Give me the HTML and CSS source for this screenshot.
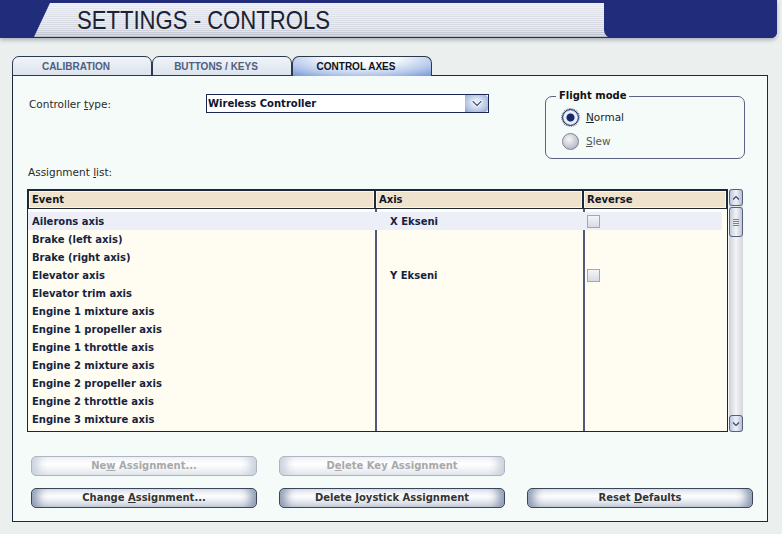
FILE: index.html
```html
<!DOCTYPE html>
<html lang="en">
<head>
    <meta charset="UTF-8">
    <title>Settings - Controls</title>
    <link rel="stylesheet" href="styles.css">
</head>
<body>
    <header class="titlebar">
        <div class="banner">
            <h1>SETTINGS - CONTROLS</h1>
        </div>
        <div class="cap"></div>
    </header>

    <main class="dialog">
        <nav class="tabs">
            <div class="tab">CALIBRATION</div>
            <div class="tab">BUTTONS / KEYS</div>
            <div class="tab active">CONTROL AXES</div>
        </nav>

        <section class="panel">
            <div class="top">
                <div class="ctrl-row">
                    <label>Controller <u>t</u>ype:</label>
                    <div class="select">
                        <span class="value">Wireless Controller</span>
                        <span class="drop">
                            <svg width="12" height="8" viewBox="0 0 12 8"><path d="M2 1.5 L6 5.5 L10 1.5" fill="none" stroke="#fff" stroke-width="3" stroke-linecap="round"/><path d="M2 1.5 L6 5.5 L10 1.5" fill="none" stroke="#4b5c8c" stroke-width="1.3" stroke-linecap="round"/></svg>
                        </span>
                    </div>
                </div>

                <fieldset class="mode">
                    <legend>Flight mode</legend>
                    <div class="radio on"><span class="dot"></span><span><u>N</u>ormal</span></div>
                    <div class="radio"><span class="dot"></span><span><u>S</u>lew</span></div>
                </fieldset>
            </div>

            <p class="caption">Assignment <u>l</u>ist:</p>

            <div class="list">
                <div class="grid">
                    <div class="head">
                        <div>Event</div>
                        <div>Axis</div>
                        <div>Reverse</div>
                    </div>
                    <div class="body">
                        <div class="row sel"><span class="ev">Ailerons axis</span><span class="ax">X Ekseni</span><span class="rv"><i class="box"></i></span></div>
                        <div class="row"><span class="ev">Brake (left axis)</span><span></span><span></span></div>
                        <div class="row"><span class="ev">Brake (right axis)</span><span></span><span></span></div>
                        <div class="row"><span class="ev">Elevator axis</span><span class="ax">Y Ekseni</span><span class="rv"><i class="box"></i></span></div>
                        <div class="row"><span class="ev">Elevator trim axis</span><span></span><span></span></div>
                        <div class="row"><span class="ev">Engine 1 mixture axis</span><span></span><span></span></div>
                        <div class="row"><span class="ev">Engine 1 propeller axis</span><span></span><span></span></div>
                        <div class="row"><span class="ev">Engine 1 throttle axis</span><span></span><span></span></div>
                        <div class="row"><span class="ev">Engine 2 mixture axis</span><span></span><span></span></div>
                        <div class="row"><span class="ev">Engine 2 propeller axis</span><span></span><span></span></div>
                        <div class="row"><span class="ev">Engine 2 throttle axis</span><span></span><span></span></div>
                        <div class="row"><span class="ev">Engine 3 mixture axis</span><span></span><span></span></div>
                    </div>
                </div>

                <div class="scroll">
                    <div class="sb-btn">
                        <svg width="8" height="6" viewBox="0 0 8 6"><path d="M1 4.5 L4 1.5 L7 4.5" fill="none" stroke="#3e4766" stroke-width="1.2"/></svg>
                    </div>
                    <div class="thumb">
                        <svg width="6" height="9" viewBox="0 0 6 9"><path d="M0 1.5 H6 M0 3.5 H6 M0 5.5 H6 M0 7.5 H6" stroke="#7a8094" stroke-width="1"/></svg>
                    </div>
                    <div class="track"></div>
                    <div class="sb-btn">
                        <svg width="8" height="6" viewBox="0 0 8 6"><path d="M1 1.5 L4 4.5 L7 1.5" fill="none" stroke="#3e4766" stroke-width="1.2"/></svg>
                    </div>
                </div>
            </div>

            <div class="buttons">
                <button class="btn off">Ne<u>w</u> Assignment...</button>
                <button class="btn off">D<u>e</u>lete Key Assignment</button>
                <span></span>
                <button class="btn">Change <u>A</u>ssignment...</button>
                <button class="btn">Delete <u>J</u>oystick Assignment</button>
                <button class="btn">Reset <u>D</u>efaults</button>
            </div>
        </section>
    </main>
</body>
</html>
```

FILE: styles.css
```css
body{
    margin: 0;
    background-color: #ebf0ef;
    font-family: "DejaVu Sans", Verdana, sans-serif;
    font-size: 10.5px;
    color: #2a2a2a;
}

/* title bar */
.titlebar{
    display: flex;
    height: 38px;
    margin-right: 5px;
    background-color: #212c7a;
    border-bottom-right-radius: 6px;
    box-shadow: 0 2px 4px rgba(40, 50, 80, .35);
}

.banner{
    flex: 0 0 582px;
    height: 34px;
    margin: 3px 0 0 34px;
    clip-path: polygon(16px 0, 100% 0, 100% 100%, 0 100%);
    background:
        repeating-linear-gradient(to bottom, rgba(255,255,255,.45) 0 1px, rgba(255,255,255,0) 1px 2px),
        linear-gradient(to bottom, #e6e8ee, #d6d9e1 75%, #b4b9c5);
}

.banner h1{
    margin: 0 0 0 43px;
    padding-top: 1px;
    font: normal 26px/33px "Liberation Sans", Arial, sans-serif;
    color: #1b2232;
    white-space: nowrap;
    transform: scaleX(.85);
    transform-origin: left;
}

.cap{
    flex: 1;
    margin-left: -12px;
    position: relative;
    z-index: 1;
    background-color: #212c7a;
    border-bottom-left-radius: 8px;
    border-bottom-right-radius: 6px;
}

/* tabs */
.dialog{
    padding: 18px 14px 0 12px;
}

.tabs{
    display: flex;
    position: relative;
    z-index: 1;
    margin-bottom: -1px;
}

.tab{
    width: 140px;
    height: 20px;
    box-sizing: border-box;
    padding-right: 12px;
    border: 1px solid #2b394d;
    border-radius: 7px 7px 0 0;
    background: linear-gradient(#f1f4f9, #dce3ed);
    font: bold 10px/19px "Liberation Sans", Arial, sans-serif;
    color: #4e6080;
    text-align: center;
}

.tab.active{
    border-bottom: none;
    background: radial-gradient(ellipse 75% 130% at 50% 0%, #f8fafd 35%, #b3c6ea 75%, #7d9ad6 100%);
    color: #0f1318;
}

/* panel */
.panel{
    border: 1px solid #1b2a3a;
    background-color: #f5fbf9;
    padding: 13px 22px 13px 14px;
}

.top{
    display: flex;
    align-items: flex-start;
}

.ctrl-row{
    display: flex;
    align-items: center;
    margin-top: 5px;
}

.ctrl-row label{
    width: 177px;
    padding-left: 2px;
}

.select{
    display: flex;
    align-items: center;
    width: 283px;
    height: 19px;
    box-sizing: border-box;
    border: 1px solid #1c2652;
    background-color: #fff;
    font-weight: bold;
    font-size: 10px;
    color: #0d1530;
}

.select .value{
    flex: 1;
    padding-left: 1px;
}

.drop{
    display: flex;
    align-items: center;
    justify-content: center;
    width: 23px;
    height: 17px;
    border-radius: 0 4px 4px 0;
    background: radial-gradient(ellipse at 50% 45%, #e4ebf7 20%, #a6b7da 80%, #7f95c4);
}

.mode{
    margin: 0 0 0 auto;
    width: 200px;
    box-sizing: border-box;
    padding: 4px 0 7px 10px;
    border: 1px solid #5b6283;
    border-radius: 7px;
}

.mode legend{
    padding: 0 3px;
    font-weight: bold;
    font-size: 10px;
    line-height: 14px;
    color: #111;
}

.radio{
    display: flex;
    align-items: center;
    gap: 7px;
    height: 20px;
    margin-left: 6px;
    color: #555;
}

.radio + .radio{
    margin-top: 4px;
}

.radio.on{
    color: #1e1e1e;
}

.dot{
    width: 17px;
    height: 17px;
    box-sizing: border-box;
    border: 1px solid #7c8292;
    border-radius: 50%;
    background: radial-gradient(circle at 40% 35%, #f6f6f8, #b3b7c3 80%, #9a9fad);
}

.radio.on .dot{
    border-color: #1c2a5a;
    background: radial-gradient(circle, #15286a 0 3.5px, #dfe6f4 4.5px, #f4f6fb 6px, #8a9cc4 8px);
    outline: 1px dotted #6a7286;
    outline-offset: 0;
}

.caption{
    margin: 7px 0 0 1px;
    line-height: 13px;
}

/* assignment list */
.list{
    display: flex;
    height: 243px;
    margin-top: 10px;
}

.grid{
    display: flex;
    flex-direction: column;
    width: 701px;
    box-sizing: border-box;
    border: 1px solid #1c2736;
}

.head{
    display: grid;
    grid-template-columns: 347px 208px 1fr;
    height: 19px;
}

.head div{
    border: 1px solid #1d2838;
    box-shadow: inset 0 0 0 1px #fbf6ec;
    background-color: #f0e3cd;
    padding-left: 3px;
    font-weight: bold;
    font-size: 10px;
    line-height: 17px;
    color: #101828;
}

.body{
    flex: 1;
    padding-top: 3px;
    background:
        linear-gradient(to right, transparent 347px, #545a7a 347px, #545a7a 349px, transparent 349px, transparent 555px, #545a7a 555px, #545a7a 557px, transparent 557px),
        #fffdf1;
}

.row{
    display: grid;
    grid-template-columns: 347px 208px 1fr;
    align-items: center;
    height: 18px;
    font-weight: bold;
    font-size: 10px;
    color: #16233f;
}

.row.sel{
    margin-right: 5px;
    background-color: #eceff8;
}

.ev{
    padding-left: 4px;
}

.ax{
    padding-left: 15px;
}

.rv{
    padding-left: 4px;
}

.box{
    display: block;
    width: 13px;
    height: 13px;
    box-sizing: border-box;
    border: 1px solid #a2a6b6;
    background: linear-gradient(#f4f5f9, #d9dbe3);
}

/* scrollbar */
.scroll{
    display: flex;
    flex-direction: column;
    width: 14px;
    margin-left: 1px;
    border-radius: 2px;
    background: linear-gradient(to right, #cdd0d6, #f3f4f6 50%, #d4d6dc);
}

.sb-btn,
.thumb{
    display: flex;
    align-items: center;
    justify-content: center;
    box-sizing: border-box;
    border: 1px solid #596079;
    border-radius: 3px;
    background: linear-gradient(to right, #bcc5db, #eef1f8 50%, #b4bed4);
}

.sb-btn{
    height: 17px;
}

.thumb{
    height: 30px;
    margin-top: 1px;
    background: linear-gradient(to right, #c6cbd8, #f3f4f8 50%, #c0c6d4);
}

.track{
    flex: 1;
}

/* buttons */
.buttons{
    display: grid;
    grid-template-columns: repeat(3, 226px);
    gap: 12px 22px;
    margin-top: 24px;
    padding-left: 4px;
}

.btn{
    height: 20px;
    padding: 0;
    border: 1px solid #3a455a;
    border-radius: 5px;
    background: linear-gradient(#dde2ea, #fdfdfe 40%, #eef1f5 60%, #c6cdd9);
    box-shadow: inset 14px 0 10px -8px #8d9ab0, inset -14px 0 10px -8px #8d9ab0;
    font: bold 10px/18px "DejaVu Sans", Verdana, sans-serif;
    color: #333;
    text-align: center;
}

.btn.off{
    border-color: #aeb5c0;
    background: linear-gradient(#eef1f5, #ffffff 40%, #f5f7f9 60%, #e1e5eb);
    box-shadow: inset 14px 0 10px -8px #c9d0dc, inset -14px 0 10px -8px #c9d0dc;
    color: #a8a8a8;
}
```
